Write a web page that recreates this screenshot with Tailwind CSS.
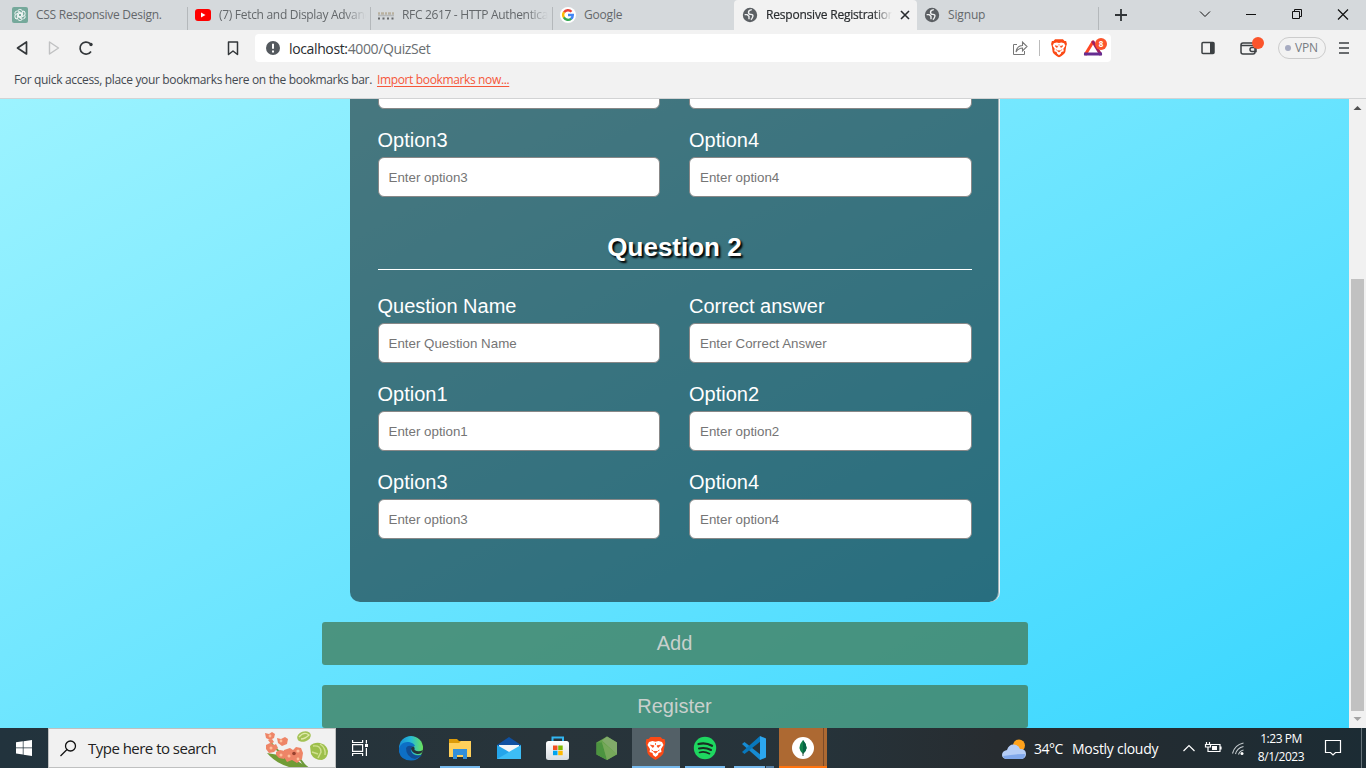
<!DOCTYPE html>
<html lang="en">
<head>
<meta charset="utf-8">
<title>Responsive Registration</title>
<script src="https://cdn.jsdelivr.net/npm/@tailwindcss/browser@4"></script>
</head>
<body class="flex h-[768px] w-[1366px] flex-col overflow-hidden font-['Open_Sans',sans-serif]">
<svg width="0" height="0" class="absolute">
  <symbol id="globe" viewBox="0 0 16 16"><circle cx="8" cy="8" r="7.200" fill="#5b5f63"/><path d="M9.800 2.600Q6.500 3 6.500 5.200T9 7.400t1.800 2.200T8.800 12.600M2.600 7.600h2.600l1.800 1.800v2.800" fill="none" stroke="#f0f1f2" stroke-width="1.400"/></symbol>
  <symbol id="lion" viewBox="0 0 20 24"><path d="M5 1h10l2 2h2l1 4-1 3-1 7q-1 3-8 7-7-4-8-7L1 10 0 7l1-4h2z" fill="#fb4a16"/><path d="M3.500 6l3.500-1 3 .8 3-.8 3.500 1L18 9l-2.500 4 .5 3-3 1-.5 2-2.500 2-2.500-2-.5-2-3-1 .5-3L2 9z" fill="#fff"/><path d="M5 9.200l3.500.6-1 1.700zM15 9.200l-3.500.6 1 1.700zM8 15.500h4l-2 1.600zM6 14l1.500.8M14 14l-1.500.8M10 7v2" fill="#fb4a16" stroke="#fb4a16" stroke-width=".8"/></symbol>
</svg>

<!-- Tab strip -->
<header class="flex h-[30px] shrink-0 bg-[#d5d9dc] text-[12px] text-[#64686b]">
  <div class="flex w-[188px] items-center pl-3"><svg class="mr-2 h-4 w-4 shrink-0" viewBox="0 0 16 16"><rect width="16" height="16" rx="2" fill="#75a99b"/><g fill="none" stroke="#fff" stroke-width=".9"><path id="petal" d="M6 3.400a2.600 2.600 0 0 1 4.600 1.800v3.200L8 9.900"/><use href="#petal" transform="rotate(60 8 8)"/><use href="#petal" transform="rotate(120 8 8)"/><use href="#petal" transform="rotate(180 8 8)"/><use href="#petal" transform="rotate(240 8 8)"/><use href="#petal" transform="rotate(300 8 8)"/></g></svg><span class="whitespace-nowrap tracking-[-0.26px]">CSS Responsive Design.</span><i class="mt-[7px] ml-auto h-[23px] w-px self-start bg-[#b4b8bb]"></i></div>
  <div class="flex w-[183px] items-center pl-[7px]"><svg class="mr-2 h-4 w-4 shrink-0" viewBox="0 0 16 16"><rect y="2" width="16" height="12" rx="3" fill="#f00"/><path d="M6 5.500v5L10.500 8z" fill="#fff"/></svg><span class="w-[147px] overflow-hidden whitespace-nowrap mask-r-from-85% tracking-[-0.3px]">(7) Fetch and Display Advanced</span><i class="mt-[7px] ml-auto h-[23px] w-px self-start bg-[#b4b8bb]"></i></div>
  <div class="flex w-[182px] items-center pl-[6px]"><svg class="mr-[7px] h-4 w-[18px] shrink-0" viewBox="0 0 18 16"><path d="M1 6.500h16" stroke="#b9b1a0" stroke-width="2.500" stroke-dasharray="2 1 3 1"/><path d="M1 8.500h16" stroke="#b5b8ba" stroke-width="1.500"/><path d="M1 11.500h16" stroke="#66696b" stroke-width="2" stroke-dasharray="2 2.500"/></svg><span class="w-[146px] overflow-hidden whitespace-nowrap mask-r-from-85% tracking-[-0.33px]">RFC 2617 - HTTP Authentication</span><i class="mt-[7px] ml-auto h-[23px] w-px self-start bg-[#b4b8bb]"></i></div>
  <div class="flex w-[181px] items-center pl-[7px]"><svg class="mr-2 h-4 w-4 shrink-0" viewBox="0 0 16 16"><circle cx="8" cy="8" r="8" fill="#fff"/><g fill="none" stroke-width="2.400"><path d="M4 5.400A4.700 4.700 0 0 1 11.500 4.800" stroke="#ea4335"/><path d="M4 5.200a5 5 0 0 0 0 5.500" stroke="#fbbc05"/><path d="M3.900 10.400a4.700 4.700 0 0 0 7.300 1.200" stroke="#34a853"/><path d="M8 8h4.800a4.800 4.800 0 0 1-1.700 3.800" stroke="#4285f4"/></g></svg><span class="tracking-[-0.2px]">Google</span></div>
  <div class="flex w-[183px] items-center rounded-t-[4px] bg-[#f2f2f2] pl-2 text-[#292c2f]"><svg class="mr-2 h-4 w-4 shrink-0"><use href="#globe"/></svg><span class="w-[126px] overflow-hidden whitespace-nowrap mask-r-from-85% tracking-[-0.2px] [-webkit-text-stroke:.2px_#292c2f]">Responsive Registration</span><svg class="ml-[8px] h-[10px] w-[10px]" viewBox="0 0 10 10"><path d="m1 1 8 8M9 1 1 9" stroke="#292c2f" stroke-width="1.600"/></svg></div>
  <div class="flex w-[182px] items-center pl-[7px]"><svg class="mr-2 h-4 w-4 shrink-0"><use href="#globe"/></svg><span class="tracking-[-0.15px]">Signup</span><i class="mt-[7px] ml-auto h-[23px] w-px self-start bg-[#b4b8bb]"></i></div>
  <svg class="h-[30px] w-[267px]" viewBox="1099 0 267 30" fill="none" stroke="#111"><path d="M1115 15h12M1121 9v12" stroke="#303437" stroke-width="1.800"/><path d="m1200 11.500 5 5 5-5"/><path d="M1246 14.500h10"/><path d="M1292.500 11.500h7v7h-7zM1294.500 11.500v-2h7v7h-2"/><path d="m1338 9.500 10 10m0-10-10 10" stroke-width="1.200"/></svg>
</header>

<!-- Toolbar -->
<div class="flex h-9 shrink-0 items-center bg-[#f2f2f2]">
  <svg class="h-9 w-[255px]" viewBox="0 30 255 36" fill="none" stroke="#33373a" stroke-width="1.700" stroke-linejoin="round"><path d="M26.500 42v12L17.500 48z"/><path d="M49.500 42v12l9-6z" stroke="#c0c1c2" stroke-width="1.400"/><path d="M91 51.500A6 6 0 1 1 90 43.500"/><circle cx="91" cy="44.500" r="1.700" fill="#33373a" stroke="none"/><path d="M228.500 42h9v12.500l-4.500-3.500-4.500 3.500z" stroke-width="1.500"/></svg>
  <div class="flex h-7 w-[856px] items-center rounded-[4px] bg-white pl-[11px] text-[14px]">
    <svg class="mr-[9px] h-[14px] w-[14px]" viewBox="0 0 14 14"><circle cx="7" cy="7" r="7" fill="#54595e"/><path d="M7 2.800v5M7 9.500v2" stroke="#fff" stroke-width="2"/></svg>
    <span class="tracking-[-0.37px] text-[#292c2f]">localhost:</span><span class="tracking-[-0.37px] text-[#6a6e71]">4000/QuizSet</span>
    <svg class="ml-auto h-7 w-[107px]" viewBox="1004 34 107 28" fill="none"><path d="M1017 44.500h-3.500v10h11V51" stroke="#777"/><path d="M1016 52q1-6.500 6.500-6.500V42l4.500 4.500-4.500 4.500v-3q-4 0-6.500 4z" stroke="#777" stroke-width="1.100"/><path d="M1039.500 40v16" stroke="#bbb"/><use href="#lion" x="1051" y="38.500" width="16" height="19"/><path d="m1093.500 41-8.500 14" stroke="#ff4724" stroke-width="3"/><path d="m1092.500 41 8.500 14" stroke="#9e1f63" stroke-width="3"/><path d="M1084 54h18" stroke="#662d91" stroke-width="3"/><circle cx="1101" cy="44" r="6" fill="#fb542b"/><text x="1101" y="46.800" text-anchor="middle" font-size="8" font-weight="700" fill="#fff" font-family="Open Sans">8</text></svg>
  </div>
  <svg class="h-9 w-[167px]" viewBox="1111 30 167 36" fill="none" stroke="#3c4043" stroke-width="1.500"><rect x="1202" y="42.500" width="12" height="11" rx="1"/><path d="M1212 43v10" stroke-width="4"/><rect x="1241" y="43" width="14" height="11" rx="2"/><path d="M1241 45.500h13M1256 47.500h-4q-2 0-2 2t2 2h4z"/><circle cx="1258" cy="43" r="6" fill="#fb542b" stroke="none"/></svg>
  <div class="flex h-[22px] w-12 items-center rounded-full border border-[#ccc] pl-[6px] text-[12px] tracking-[-0.2px] text-[#777c83]"><i class="mr-[4px] h-[6px] w-[6px] rounded-full bg-[#a6abc1]"></i>VPN</div>
  <svg class="ml-3 h-[14px] w-3" viewBox="0 0 12 14"><path d="M1 2h10M1 7h10M1 12h10" stroke="#3c4043" stroke-width="1.700"/></svg>
</div>
<div class="h-[33px] shrink-0 border-b border-[#d2d3d4] bg-[#f2f2f2] pl-[14px] text-[12px] leading-[27px] text-[#434950]"><span class="tracking-[-0.34px]">For quick access, place your bookmarks here on the bookmarks bar.</span><a class="ml-[5px] tracking-[-0.36px] text-[#f5573a] underline underline-offset-2">Import bookmarks now...</a></div>

<!-- Page -->
<main class="flex h-[629px] shrink-0">
  <div class="flex w-[1349px] flex-col items-center justify-end overflow-hidden bg-[linear-gradient(152deg,#9cf3ff_0%,#39d6ff_100%)] font-['Liberation_Sans',sans-serif]">
    <section class="w-[650px] shrink-0 rounded-[10px] border-r border-[#eef5f6] bg-black/50 bg-clip-padding pr-[27px] pb-[63px] pl-7 text-[20px] text-white shadow-[inset_-1px_0_#a3b2b8]">
      <div class="grid grid-cols-2 gap-x-[29px]">
        <label class="flex h-[88px] flex-col pt-5 leading-[23px]">Option1<input class="mt-[5px] h-10 rounded-[6px] border border-[#888] bg-white px-[10px] text-[13.33px] placeholder:text-[#757575]" placeholder="Enter option1"></label>
        <label class="flex h-[88px] flex-col pt-5 leading-[23px]">Option2<input class="mt-[5px] h-10 rounded-[6px] border border-[#888] bg-white px-[10px] text-[13.33px] placeholder:text-[#757575]" placeholder="Enter option2"></label>
        <label class="flex h-[88px] flex-col pt-5 leading-[23px]">Option3<input class="mt-[5px] h-10 rounded-[6px] border border-[#888] bg-white px-[10px] text-[13.33px] placeholder:text-[#757575]" placeholder="Enter option3"></label>
        <label class="flex h-[88px] flex-col pt-5 leading-[23px]">Option4<input class="mt-[5px] h-10 rounded-[6px] border border-[#888] bg-white px-[10px] text-[13.33px] placeholder:text-[#757575]" placeholder="Enter option4"></label>
      </div>
      <h2 class="mb-[5px] h-[73px] border-b border-white pt-[35px] text-center text-[26px] leading-[30px] font-bold [text-shadow:2px_2px_2px_black]">Question 2</h2>
      <div class="grid grid-cols-2 gap-x-[29px]">
        <label class="flex h-[88px] flex-col pt-5 leading-[23px]">Question Name<input class="mt-[5px] h-10 rounded-[6px] border border-[#888] bg-white px-[10px] text-[13.33px] placeholder:text-[#757575]" placeholder="Enter Question Name"></label>
        <label class="flex h-[88px] flex-col pt-5 leading-[23px]">Correct answer<input class="mt-[5px] h-10 rounded-[6px] border border-[#888] bg-white px-[10px] text-[13.33px] placeholder:text-[#757575]" placeholder="Enter Correct Answer"></label>
        <label class="flex h-[88px] flex-col pt-5 leading-[23px]">Option1<input class="mt-[5px] h-10 rounded-[6px] border border-[#888] bg-white px-[10px] text-[13.33px] placeholder:text-[#757575]" placeholder="Enter option1"></label>
        <label class="flex h-[88px] flex-col pt-5 leading-[23px]">Option2<input class="mt-[5px] h-10 rounded-[6px] border border-[#888] bg-white px-[10px] text-[13.33px] placeholder:text-[#757575]" placeholder="Enter option2"></label>
        <label class="flex h-[88px] flex-col pt-5 leading-[23px]">Option3<input class="mt-[5px] h-10 rounded-[6px] border border-[#888] bg-white px-[10px] text-[13.33px] placeholder:text-[#757575]" placeholder="Enter option3"></label>
        <label class="flex h-[88px] flex-col pt-5 leading-[23px]">Option4<input class="mt-[5px] h-10 rounded-[6px] border border-[#888] bg-white px-[10px] text-[13.33px] placeholder:text-[#757575]" placeholder="Enter option4"></label>
      </div>
    </section>
    <button class="mt-5 h-[43px] w-[706px] shrink-0 rounded-[3px] bg-[#437d5c]/78 pb-[2px] text-[20px] text-[#c9d0cd]">Add</button>
    <button class="mt-5 h-[43px] w-[706px] shrink-0 rounded-[3px] bg-[#437d5c]/78 pb-[2px] text-[20px] text-[#c9d0cd]">Register</button>
  </div>
  <div class="flex w-[17px] flex-col items-center bg-[#f1f1f1]">
    <svg class="h-[180px] w-[17px] shrink-0" viewBox="0 0 17 180"><path d="m4.500 11 4-4 4 4z" fill="#505050"/></svg>
    <i class="h-[432px] w-[13px] shrink-0 bg-[#c1c1c1]"></i>
    <svg class="h-[17px] w-[17px]" viewBox="0 0 17 17"><path d="m4.500 6 4 4 4-4z" fill="#a3a3a3"/></svg>
  </div>
</main>

<!-- Taskbar -->
<footer class="flex h-10 shrink-0 bg-[linear-gradient(90deg,#22333d,#28343a_40%,#26333a_60%,#272c30_73%,#1c2c34)] text-white">
  <div class="flex w-12 items-center justify-center"><svg class="h-4 w-4" viewBox="0 0 16 16" fill="#fff"><path d="M0 2.300 6.800 1.300v6.200H0zM7.500 1.200 16 0v7.500H7.500zM0 8.300h6.800v6.300L0 13.600zM7.500 8.300H16V16l-8.500-1.200z"/></svg></div>
  <div class="flex w-[288px] items-center border border-[#bfc0c0] bg-[#f1f1f1] pl-[11px] text-[#222]">
    <svg class="mr-[11px] h-[17px] w-[17px]" viewBox="0 0 17 17" fill="none" stroke="#111" stroke-width="1.300"><circle cx="10.500" cy="6" r="5"/><path d="m7 9.500-6.500 6.500"/></svg>
    <span class="text-[15px] tracking-[-0.52px]">Type here to search</span>
    <svg class="ml-auto h-[38px] w-[74px]" viewBox="261 729 74 38"><path d="M267 753q14 2 32 9l12 7h-13q-20-3-31-16z" fill="#719b35"/><path d="M271 743q7 9 16 14t18 11M298 754q2 8 10 14" stroke="#6d9a3a" stroke-width="2" fill="none"/><g fill="#ee8567"><path d="m265 733 4 1 3-2 3 2-1 4-4 2-4-2z"/><path d="m277 738 4 1 4-2 3 2-1 5-5 2-4-3z"/><path d="m266 745 4-2 4 2 2-1 2 4-4 4-5 1-3-4z"/><path d="m268 740 4-1 2 3-3 2z"/><path d="m276 752 4-2 5 1 2 4-3 4-5-1-3-3z"/><path d="m284 750 6-2 3 2 3-3 5 1 2 5-1 6-5 4-5-3-5 2-3-5z"/></g><g fill="#ffbf9b"><circle cx="270" cy="736" r="1.400"/><circle cx="281" cy="741" r="1.400"/><circle cx="271" cy="748" r="1.500"/><circle cx="281" cy="755" r="1.500"/><circle cx="289" cy="756" r="1.500"/><circle cx="298" cy="751" r="1.600"/><circle cx="298" cy="759" r="1.400"/></g><circle cx="294" cy="753.500" r="1.800" fill="#98422e"/><ellipse cx="304" cy="736.500" rx="7" ry="5" fill="#a3c254" transform="rotate(-20 304 736.500)"/><path d="M299 737q5-6 10-2-4 4-8 4" stroke="#dfeaa9" stroke-width="1.300" fill="none"/><path d="M310 746q4-4 10-3 7 2 8 8 0 7-6 9-8 0-11-6z" fill="#9dbf4b"/><path d="M313 746q8-1 8 6l-3 6M320 744q6 4 5 11M312 752l6 2" stroke="#cfe08f" stroke-width="1.500" fill="none"/></svg>
  </div>
  <div class="flex w-12 items-center justify-center"><svg class="h-4 w-4" viewBox="0 0 16 16" fill="none" stroke="#fff" stroke-width="1.200"><path d="M.6 0v2.500h10V0M.6 16v-2.500h10V16M.6 4.600h10v6.800H.6zM14.400 0v3.500M14.400 8v8"/><path d="M13 4h3v3h-3z" fill="#fff" stroke="none"/></svg></div>
  <svg class="h-10 w-[443px]" viewBox="384 728 443 40">
    <defs><linearGradient id="ea" x1="0" x2="1"><stop stop-color="#168ed8"/><stop offset=".5" stop-color="#27bcd5"/><stop offset="1" stop-color="#6be35a"/></linearGradient><linearGradient id="st" x2="0" y2="1"><stop stop-color="#fff"/><stop offset="1" stop-color="#d9dde1"/></linearGradient></defs>
    <circle cx="411" cy="748" r="12" fill="url(#ea)"/><path d="M399 748q3-7 10-6 5 1 6 4-3 0-4 3 0 5 5 6 3 1 6-.5-4 6-11 6-10 0-12-8.500z" fill="#0d6fc5"/><path d="M406 748q0 9 9 11 5-2 7-4.500-8 3-11-3-1-3 2-5-5-2-7 1.500z" fill="#114d93"/><path d="M411 749q0-2 3-2.500 1 2 .5 3.500 4 2.500 8.500 0-1 4.500-6 4-5-1-6-5z" fill="#26333a"/>
    <path d="M449 739h8l2 2h12v4h-22z" fill="#dc9b0a"/><path d="M449 743h10l2-2h10v16h-22z" fill="#ffd05b"/><path d="M453 749h14v10h-4v-4h-6v4h-4z" fill="#3290dc"/><path d="M440 766h40v2h-40z" fill="#76b9ed"/>
    <path d="m497 745 12-8 12 8v4h-24z" fill="#0e50a1"/><path d="M499 745h20v3l-10 5-10-5z" fill="#f2f5f7"/><path d="m497 745 24 14h-24z" fill="#24a5ea"/><path d="m521 745-24 14h24z" fill="#3dbdf5"/>
    <path d="M552.500 742v-4.500h10.500v4.500" fill="none" stroke="#32b6f1" stroke-width="2"/><rect x="546" y="741" width="23" height="19" rx="2.500" fill="url(#st)"/><path d="M553 745.500h4.500v4.500H553z" fill="#f25022"/><path d="M558.200 745.500h4.500v4.500h-4.500z" fill="#7fba00"/><path d="M553 750.700h4.500v4.500H553z" fill="#00a4ef"/><path d="M558.200 750.700h4.500v4.500h-4.500z" fill="#ffb900"/>
    <path d="m607 736.500 10 6v12l-10 5.500-10.500-5.500v-12z" fill="#65a24b"/><path d="m607 736.500 10 6v12l-15-14z" fill="#81aa6a"/><path d="m596.500 742.500 5.500 0 5 17.500-10.500-5.500z" fill="#4c9440"/><path d="m602 742 15 12-10 6z" fill="#76a85a"/>
    <path d="M632 728h48v40h-48z" fill="#536067"/><use href="#lion" x="645.500" y="736" width="20" height="24"/><path d="M632 766h48v2h-48zM685 766h40v2h-40zM734 766h31v2h-31z" fill="#76b9ed"/><path d="M766 766h8v2h-8z" fill="#547fa5"/>
    <circle cx="705" cy="748" r="11.200" fill="#1ed760"/><g fill="none" stroke="#192e22" stroke-linecap="round"><path d="M698.500 744q7-2 13.500 1.700" stroke-width="2.300"/><path d="M699 748.500q6-1.700 12 1.500" stroke-width="2"/><path d="M699.500 752.500q5-1.500 10 1.200" stroke-width="1.700"/></g>
    <path d="m742 744 2.500-2 16.500 13-1 5z" fill="#168bd2"/><path d="m742 752 2.500 2L761 741l-1-5z" fill="#0878bd"/><path d="m760 736 6 2.500v19L760 760z" fill="#2ca7ef"/>
    <path d="M779 728h48v40h-48z" fill="#ad6932"/><path d="M823 728h1v38h-1z" fill="#7c4b28"/><path d="M779 766h48v2h-48z" fill="#ff7410"/><circle cx="803" cy="748" r="11" fill="#fff"/><path d="M803 740q7 8 0 14-7-6 0-14z" fill="#12834b"/><path d="M803 740q7 8 0 14z" fill="#076544"/><path d="M803 752v4" stroke="#345746"/>
  </svg>
  <svg class="ml-[173px] h-10 w-[30px]" viewBox="1000 728 30 40"><circle cx="1019" cy="745.500" r="6" fill="#ffa21b"/><path d="M1006 759q-4-1-4-4 0-4 5-5 2-6 7-5.500 5 .5 6 4.500 6 0 6 5 0 4-4 5z" fill="#b5cdf6"/><path d="M1003 756q12-2 22-2 0 5-4 5h-15q-2 0-3-3z" fill="#81a8eb"/></svg>
  <div class="flex items-center text-[14px] whitespace-nowrap"><span class="ml-[4px] w-[38px] tracking-[-0.5px]">34°C</span><span class="tracking-[-0.27px]">Mostly cloudy</span></div>
  <svg class="ml-auto h-10 w-[66px]" viewBox="1182 728 66 40" fill="none" stroke="#fff" stroke-width="1.200"><path d="m1183.500 751 5.500-5.500 5.500 5.500"/><path d="M1210 744.500h10v7h-12v-3M1221 746.500v3M1206.500 742v2M1209.500 742v2M1205.500 744.500h5v2.500h-5zM1208 747v2"/><path d="M1212 746h5v4h-5z" fill="#fff" stroke="none"/><path d="M1232.500 753.500q2-8.500 11-10.500M1235.500 754q1.500-6 8-7.500M1238.500 754.500q1-3.500 5-4.500" stroke="#c8ced1" stroke-width="1.100"/><circle cx="1242" cy="753.500" r="1.500" fill="#fff" stroke="none"/></svg>
  <div class="w-[66px] pt-[2px] text-center text-[12px] leading-[18px] tracking-[-0.45px] whitespace-nowrap">1:23 PM<br>8/1/2023</div>
  <svg class="h-10 w-[52px]" viewBox="1314 728 52 40" fill="none" stroke="#fff" stroke-width="1.200"><path d="M1325.500 740.500h15v12h-5l-2.500 2.500-2.500-2.500h-5z"/><path d="M1361.500 728v40" stroke="#66737a" stroke-width="1"/></svg>
</footer>
</body>
</html>
